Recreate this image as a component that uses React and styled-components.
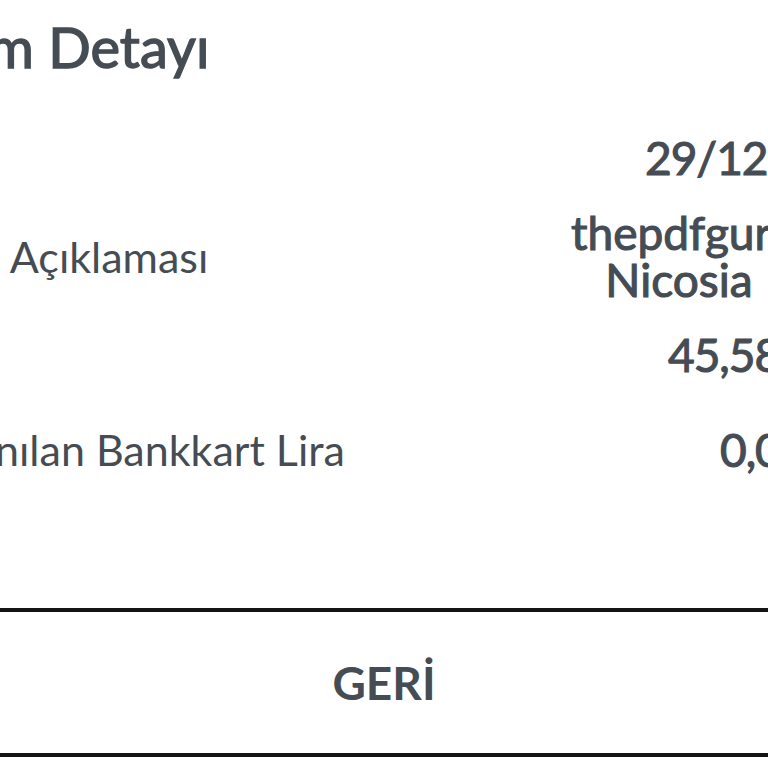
import React from "react";
import styled, { createGlobalStyle } from "styled-components";

const GlobalStyle = createGlobalStyle`
  html, body {
    margin: 0;
    padding: 0;
    background: #ffffff;
    overflow: hidden;
  }
  body {
    font-family: Lato, "Open Sans", sans-serif;
    color: #454c53;
  }
`;

const Screen = styled.div`
  width: 768px;
  height: 768px;
  overflow: hidden;
  display: flex;
  flex-direction: column;
  background: #ffffff;
`;

const Sheet = styled.div`
  margin-left: -98px;
  width: 1100px;
  display: flex;
  flex-direction: column;
`;

const Title = styled.h1`
  margin: 11px 0 37px;
  padding-left: 4px;
  font-size: 56px;
  line-height: 72px;
  font-weight: 400;
  -webkit-text-stroke: 1.4px #454c53;
  white-space: nowrap;
`;

const Row = styled.div`
  display: flex;
  align-items: center;
  padding: 14px 0;
  margin-top: ${(p) => p.$space || 0}px;
`;

const Label = styled.div`
  flex: 0 0 658px;
  font-size: 43px;
  line-height: 47px;
  font-weight: 400;
  white-space: nowrap;
`;

const Value = styled.div`
  flex: 0 0 auto;
  width: 216px;
  padding-left: ${(p) => p.$indent || 0}px;
  font-size: 46px;
  line-height: 47px;
  font-weight: 400;
  letter-spacing: ${(p) => (p.$center ? "0" : "-1px")};
  -webkit-text-stroke: 1.1px #454c53;
  text-align: ${(p) => (p.$center ? "center" : "left")};
`;

const Line = styled.div`
  white-space: nowrap;
`;

const Footer = styled.button`
  margin-top: auto;
  margin-bottom: 11px;
  width: 100%;
  height: 149px;
  border: none;
  border-top: 4px solid #141414;
  border-bottom: 4px solid #141414;
  background: #ffffff;
  color: #454c53;
  font-family: Lato, "Open Sans", sans-serif;
  font-size: 46px;
  font-weight: 700;
  cursor: pointer;
`;

const rows = [
  { label: "Tarih", value: ["29/12/2023"], indent: 85 },
  { label: "İşlem Açıklaması", value: ["thepdfguru.com", "Nicosia"], indent: 11, center: true },
  { label: "Tutar", value: ["45,58 TL"], indent: 108 },
  { label: "Kullanılan Bankkart Lira", value: ["0,00 TL"], indent: 160, space: 20 },
];

export default function App() {
  return (
    <>
      <GlobalStyle />
      <Screen>
        <Sheet>
          <Title>İşlem Detayı</Title>
          {rows.map((r) => (
            <Row key={r.label} $space={r.space}>
              <Label>{r.label}</Label>
              <Value $indent={r.indent} $center={r.center}>
                {r.value.map((v) => (
                  <Line key={v}>{v}</Line>
                ))}
              </Value>
            </Row>
          ))}
        </Sheet>
        <Footer>GERİ</Footer>
      </Screen>
    </>
  );
}
